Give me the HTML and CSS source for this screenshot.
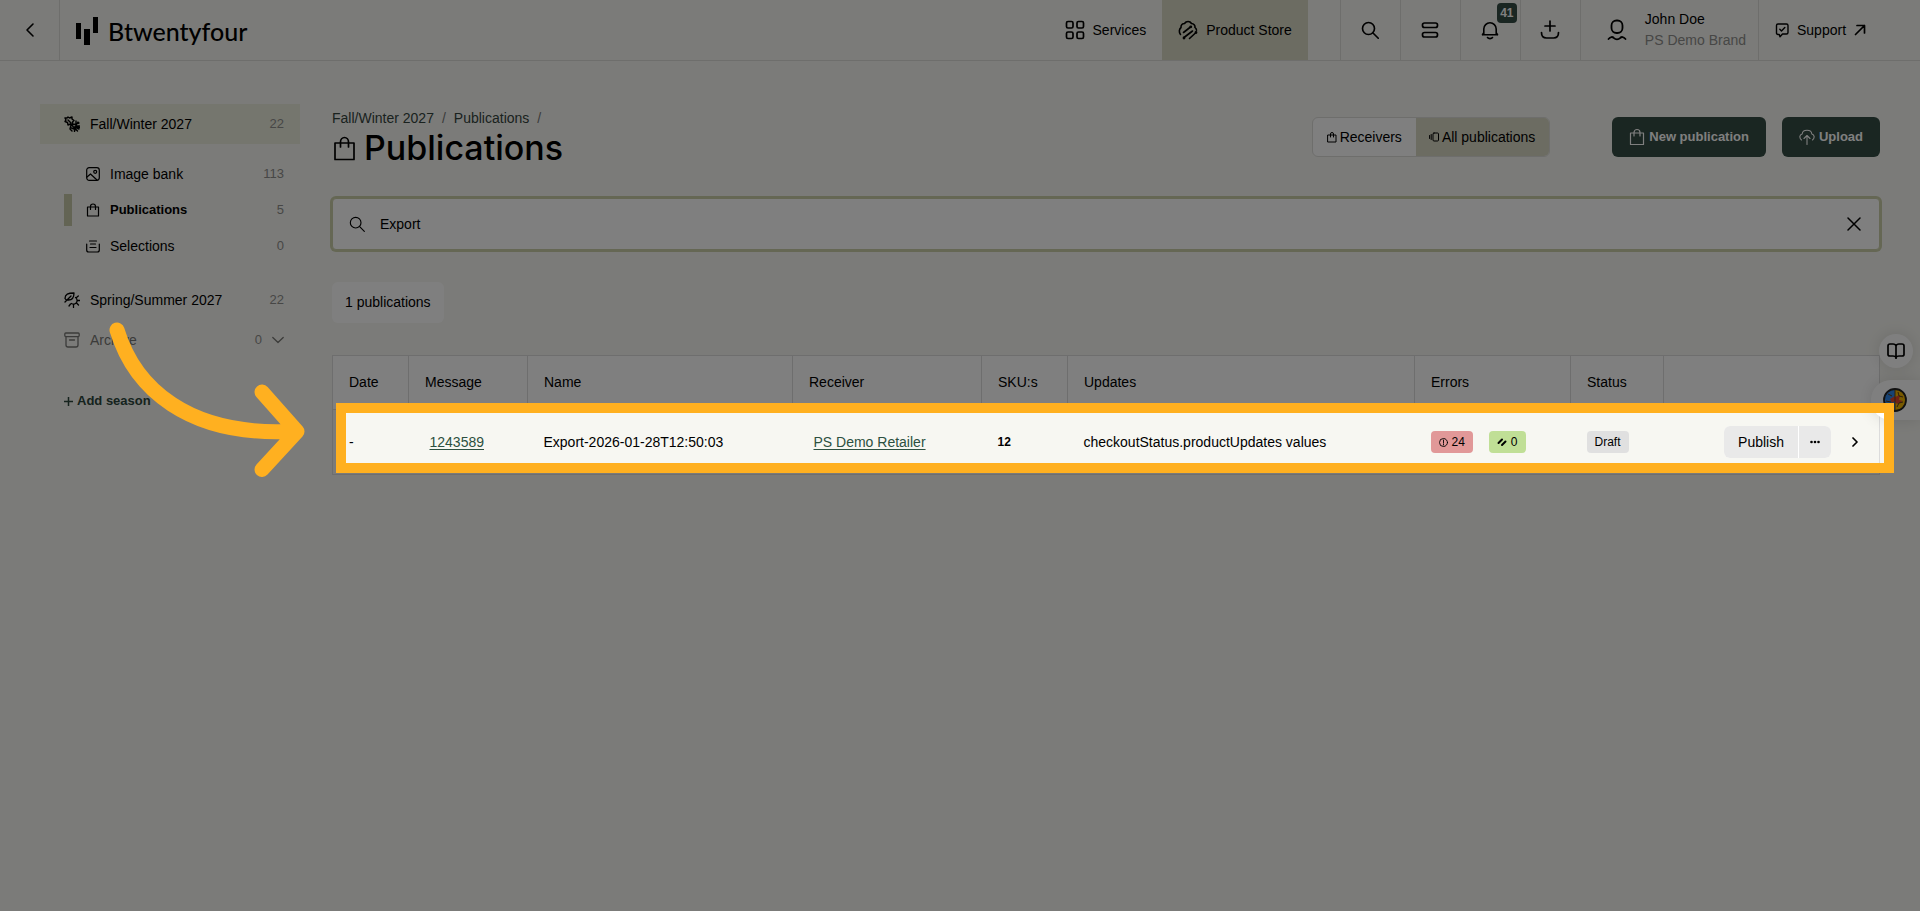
FILE: index.html
```html
<!DOCTYPE html>
<html lang="en">
<head>
<meta charset="utf-8">
<title>Publications</title>
<link rel="stylesheet" href="styles.css">
</head>
<body>
<svg class="defs" aria-hidden="true">
  <symbol id="bag" viewBox="0 0 24 24"><path d="M3.5 7.500h17v14h-17zM8 11V6.500a4 4 0 0 1 8 0V11"/></symbol>
  <symbol id="search" viewBox="0 0 24 24"><circle cx="10" cy="10" r="8"/><path d="M16 16l7 7"/></symbol>
</svg>

<header class="topbar">
  <button class="back" aria-label="Back"><svg class="ic" width="16" height="16" viewBox="0 0 16 16" stroke-width="1.6"><path d="M11 2L5 8l6 6"/></svg></button>
  <a class="logo" href="#">
    <svg width="22" height="28" viewBox="0 0 22 28"><path d="M0 6h5v16H0zM8 12h6v16H8zM17 0h5v16h-5z"/></svg>
    <span>Btwentyfour</span>
  </a>
  <nav class="nav">
    <a class="nav-link" href="#"><svg class="ic" width="20" height="20" viewBox="0 0 20 20" stroke-width="1.700"><rect x="1.500" y="1.500" width="6.500" height="6.500" rx="1.500"/><rect x="12" y="1.500" width="6.500" height="6.500" rx="1.500"/><rect x="1.500" y="12" width="6.500" height="6.500" rx="1.500"/><rect x="12" y="12" width="6.500" height="6.500" rx="1.500"/></svg>Services</a>
    <a class="nav-link active" href="#"><svg class="ic" width="20" height="20" viewBox="0 0 20 20" stroke-width="1.600"><path d="M2.500 14.500C.8 12.500 1 9 3 7.500 2.800 4.800 4.500 3.500 6.500 3.500 8.200.8 12 .8 13.500 3.500c2.200.2 3.800 1.800 3.500 4 1 .8 1.500 1.800 1.500 2.800M5.500 12.500L12.500 7M6 17.500l8.500-6.500M11.500 18.500l6.500-6"/><circle cx="12.800" cy="6.800" r=".6"/><circle cx="6" cy="18" r=".6"/><circle cx="18" cy="12.500" r=".6"/></svg>Product Store</a>
    <button class="cell first" aria-label="Search"><svg class="ic" width="18" height="18" stroke-width="2.200"><use href="#search"/></svg></button>
    <button class="cell" aria-label="Lists"><svg class="ic" width="18" height="18" viewBox="0 0 18 18" stroke-width="1.700"><rect x="1.500" y="2" width="15" height="4.500" rx="2"/><rect x="1.500" y="11.500" width="15" height="4.500" rx="2"/></svg></button>
    <button class="cell bell" aria-label="Notifications"><svg class="ic" width="20" height="20" viewBox="0 0 20 20" stroke-width="1.600"><path d="M2.500 14.800h15M3.800 14.500V9a6.200 6.200 0 0 1 12.400 0v5.500M2.500 14.800l1.300-2M17.500 14.800l-1.300-2M7.500 17.500c1 1.500 4 1.500 5 0"/></svg><span class="count-badge">41</span></button>
    <button class="cell" aria-label="Downloads"><svg class="ic" width="20" height="20" viewBox="0 0 20 20" stroke-width="1.700"><path d="M10 1v10M5 6h10M1.500 12.500c0 4 2 5.500 5 5.500h7c3 0 5-1.500 5-5.500"/></svg></button>
    <button class="cell user"><svg class="ic" width="20" height="22" viewBox="0 0 20 22" stroke-width="1.800"><rect x="4.500" y="1.500" width="11" height="12.500" rx="5"/><path d="M1.500 20c2-2.500 4-2.500 5.500-.8 1.500 1.500 4.500 1.500 6 0 1.500-1.700 3.500-1.700 5.500.8"/></svg><span class="who"><span>John Doe</span><span class="muted">PS Demo Brand</span></span></button>
    <a class="cell support" href="#"><svg class="ic" width="14" height="16" viewBox="0 0 14 16" stroke-width="1.400"><path d="M3 2h8.500q1.500 0 1.500 1.500v7q0 1.500-1.500 1.500H7.500L5 14.800 4.300 12.500H3Q1.500 12.500 1.500 11V3.500Q1.500 2 3 2zM4.800 7.200l1.700 1.700L9.800 5.500"/></svg>Support<svg class="ic" width="12" height="12" viewBox="0 0 12 12" stroke-width="1.700"><path d="M1.500 10.500l9-9M3 1.500h7.500V9"/></svg></a>
  </nav>
</header>

<div class="layout">
  <aside class="side">
    <a class="season active" href="#"><svg class="ic" width="16" height="16" viewBox="0 0 16 16" stroke-width="1.400"><path d="M4 1l1.500 1L8 1v2l2 1.500L8.500 6l.5 2.500L6.500 8 4 9 3.500 6.500 1 5.500 2 4 1 2h2zM4 4l3 3M7 9l-1 4 2 2M8 9.500l5.500 5.500M10 8.500l5-1.500M12 5v5h3.500M10.500 11v4.500M10 11.500h5.500M14 6l-3 5 4 2M7.500 12l5 2"/></svg><span>Fall/Winter 2027</span><span class="num">22</span></a>
    <nav class="sub">
      <a href="#"><svg class="ic" width="14" height="14" viewBox="0 0 14 14" stroke-width="1.200"><rect x=".7" y=".7" width="12.600" height="12.600" rx="2.500"/><circle cx="9.200" cy="4.800" r="1.500"/><path d="M1 10l3.500-3L11 13"/></svg><span>Image bank</span><span class="num">113</span></a>
      <a class="current" href="#"><svg class="ic" width="14" height="14" viewBox="0 0 14 14" stroke-width="1.200"><path d="M1.500 4h11v9h-11zM4.500 6.500V3.500a2.500 2.500 0 0 1 5 0v3"/></svg><span>Publications</span><span class="num">5</span></a>
      <a href="#"><svg class="ic" width="14" height="14" viewBox="0 0 14 14" stroke-width="1.200"><path d="M.7 5v6q0 2 2 2h8.600q2 0 2-2V5M3.500 2h7M4.500 5h5M4 8.500h6"/></svg><span>Selections</span><span class="num">0</span></a>
    </nav>
    <a class="season" href="#"><svg class="ic" width="16" height="16" viewBox="0 0 16 16" stroke-width="1.300"><path d="M1 6.500C1 2 4 1 10 1c0 5-2 7-5.500 7Q2 8.500 1 6.500zM1 10l6-6M7.500 11.500a3.500 3.500 0 0 0 4-6M12.500 5.500l1.800-1.500M13.500 8.500H16M12.500 11l2 2M9.500 13v2.500M6.500 12L5 14"/></svg><span>Spring/Summer 2027</span><span class="num">22</span></a>
    <a class="season archive" href="#"><svg class="ic" width="16" height="16" viewBox="0 0 16 16" stroke-width="1.300"><rect x=".8" y="1" width="14.400" height="3.600" rx="1"/><path d="M2 4.800V13q0 2 2 2h8q2 0 2-2V4.800M5.500 8h5"/></svg><span>Archive</span><span class="num">0</span><svg class="ic" width="12" height="12" viewBox="0 0 12 12" stroke-width="1.300"><path d="M.8 3.500L6 8.500l5.200-5"/></svg></a>
    <button class="add"><svg class="ic" width="9" height="9" viewBox="0 0 9 9" stroke-width="1.500"><path d="M4.500 0v9M0 4.500h9"/></svg>Add season</button>
    <svg class="arrow" width="210" height="170" viewBox="0 0 210 170"><path d="M17 20C34 76 86 128 196 121M162 82l35 39.500-35 38"/></svg>
  </aside>

  <main class="main">
    <div class="head">
      <div>
        <nav class="crumbs"><a href="#">Fall/Winter 2027</a><i>/</i><a href="#">Publications</a><i>/</i></nav>
        <h1><svg class="ic" width="24" height="28" viewBox="0 0 24 28" stroke-width="1.700"><path d="M3 9h19v16.500H3zM8.500 13V8a4 4.500 0 0 1 8 0v5"/></svg>Publications</h1>
      </div>
      <div class="actions">
        <div class="toggle">
          <button><svg class="ic" width="10" height="12" viewBox="0 0 10 12" stroke-width="1"><path d="M1 4h8v7H1zM3.500 6V3a1.500 1.500 0 0 1 3 0v3"/></svg>Receivers</button>
          <button class="on"><svg class="ic" width="10" height="10" viewBox="0 0 10 10" stroke-width="1"><path d="M.6 3.500v3M2.200 2.500v5"/><rect x="4" y="1" width="5.500" height="8" rx="1"/></svg>All publications</button>
        </div>
        <button class="primary"><svg class="ic" width="16" height="18" viewBox="0 0 16 18" stroke-width="1.200"><path d="M1.500 5h13v11.500h-13zM5 8V4.500a3 3 0 0 1 6 0V8"/></svg>New publication</button>
        <button class="primary"><svg class="ic" width="16" height="16" viewBox="0 0 16 16" stroke-width="1.100"><path d="M2.500 11C0 9 .5 5.500 3.200 5 3.500 0 12.500 0 12.800 5c2.700.5 3.200 4 .7 6M8 15.500V7M5 9.500L8 6.500l3 3"/></svg>Upload</button>
      </div>
    </div>

    <label class="searchbox">
      <svg class="ic" width="16" height="16" stroke-width="1.700"><use href="#search"/></svg>
      <input type="text" value="Export" aria-label="Search publications">
      <button aria-label="Clear"><svg class="ic" width="14" height="14" viewBox="0 0 14 14" stroke-width="1.500"><path d="M1 1l12 12M13 1L1 13"/></svg></button>
    </label>

    <p class="total">1 publications</p>

    <div class="table-wrap">
      <table>
        <colgroup><col class="c-date"><col class="c-message"><col class="c-name"><col class="c-receiver"><col class="c-skus"><col><col class="c-errors"><col class="c-status"><col class="c-tools"></colgroup>
        <thead><tr><th>Date</th><th>Message</th><th>Name</th><th>Receiver</th><th>SKU:s</th><th>Updates</th><th>Errors</th><th>Status</th><th></th></tr></thead>
        <tbody><tr>
          <td>-</td>
          <td><a class="link" href="#">1243589</a></td>
          <td>Export-2026-01-28T12:50:03</td>
          <td><a class="link" href="#">PS Demo Retailer</a></td>
          <td class="strong">12</td>
          <td>checkoutStatus.productUpdates values</td>
          <td><div class="pills"><span class="pill red"><svg class="ic" width="9" height="9" viewBox="0 0 9 9" stroke-width=".9"><circle cx="4.500" cy="4.500" r="4"/><path d="M4.500 2v3M4.500 6v1"/></svg>24</span><span class="pill green"><svg class="ic" width="10" height="10" viewBox="0 0 10 10" stroke-width="2"><path d="M1.500 6L5 2.500M5 8l3.500-3.500"/></svg>0</span></div></td>
          <td><span class="pill gray">Draft</span></td>
          <td><div class="tools"><div class="split"><button>Publish</button><button class="more" aria-label="More"><svg width="10" height="4" viewBox="0 0 10 4"><circle cx="1.500" cy="2" r="1.300"/><circle cx="5" cy="2" r="1.300"/><circle cx="8.500" cy="2" r="1.300"/></svg></button></div><button class="open" aria-label="Open"><svg class="ic" width="6" height="10" viewBox="0 0 6 10" stroke-width="1.700"><path d="M1 1l4 4-4 4"/></svg></button></div></td>
        </tr></tbody>
      </table>
      <div class="spotlight"></div>
    </div>
  </main>
</div>

<div class="floaters">
  <button class="guide" aria-label="Guide"><svg class="ic" width="18" height="16" viewBox="0 0 18 16" stroke-width="1.700"><path d="M9 3v12.500M9 3Q8.500 1 6 1H3Q1 1 1 3v8.500q0 1.500 2 1.500h3q2.500 0 3 1.500.5-1.500 3-1.500h3q2 0 2-1.500V3q0-2-2-2h-3Q9.500 1 9 3z"/></svg></button>
  <button class="brain" aria-label="Assistant"><svg width="24" height="24" viewBox="0 0 24 24"><circle cx="12" cy="12" r="11" fill="#f0b400"/><path d="M12 1a11 11 0 0 0 0 22z" fill="#2f86e8"/><path d="M12 8l-5 3 2 4 3-2zM12 9l5-2-1 5 4 1-6 3-2-2z" fill="#e0452c"/><path d="M12 2v20M5 6l4 2M3 13l5 1M8 19l1-4M15 4l1 4 4 1M14 19l2-4 4-1" fill="none" stroke="#604018" stroke-width="1"/><circle cx="12" cy="12" r="11" fill="none" stroke="#222" stroke-width="1.800"/></svg></button>
</div>
</body>
</html>
```
FILE: styles.css
```css
* { box-sizing: border-box; }

body {
  margin: 0;
  min-height: 100vh;
  background: #f7f7f2;
  color: #000;
  font: 14px/20px "Liberation Sans", Arial, sans-serif;
}

button, input { font: inherit; color: inherit; border: 0; background: none; padding: 0; margin: 0; }
a { color: inherit; text-decoration: none; }
svg { flex: none; }

.defs { position: absolute; width: 0; height: 0; }
.ic { fill: none; stroke: currentColor; stroke-linecap: round; stroke-linejoin: round; }

/* Top bar */
.topbar { display: flex; height: 61px; border-bottom: 1px solid #dcdcd8; }
.back { width: 60px; border-right: 1px solid #dcdcd8; display: grid; place-items: center; }
.logo { display: flex; align-items: center; gap: 10px; padding: 2px 0 0 16px; font: 500 25px/28px Lato, sans-serif; }
.nav { display: flex; margin-left: auto; }
.nav-link { display: flex; align-items: center; gap: 8px; padding: 0 16px; }
.nav-link.active { background: #d8d8c4; }
.cell { position: relative; width: 60px; display: flex; align-items: center; justify-content: center; border-left: 1px solid #dcdcd8; }
.cell.first { margin-left: 32px; }
.count-badge {
  position: absolute; top: 3px; right: 3px; width: 20px; height: 20px;
  border-radius: 4px; background: #344c44; color: #fff;
  font-size: 12px; font-weight: bold; text-align: center;
}
.cell.user { width: auto; padding: 0 12px 0 26px; gap: 18px; }
.who { display: flex; flex-direction: column; text-align: left; line-height: 21px; }
.muted { color: #8e8e8c; }
.cell.support { width: 162px; justify-content: flex-start; gap: 8px; padding-left: 16px; }

/* Page columns */
.layout { display: flex; gap: 32px; padding: 43px 40px 0; }
.side { position: relative; width: 260px; flex: none; }
.main { flex: 1; min-width: 0; }

/* Sidebar */
.season { display: flex; align-items: center; gap: 10px; height: 40px; padding: 0 16px 0 24px; }
.season.active { background: #ebecdc; }
.season.archive { color: #777774; }
.num { margin-left: auto; color: #8e8e8c; font-size: 13px; }
.sub { display: flex; flex-direction: column; padding: 12px 0 16px; }
.sub a { display: flex; align-items: center; gap: 10px; height: 36px; padding: 0 16px 0 46px; }
.sub .current { position: relative; font-size: 13px; font-weight: bold; }
.sub .current::before { content: ""; position: absolute; left: 24px; top: 2px; width: 8px; height: 32px; background: #c6c8a8; }
.sub .current .num { font-weight: normal; }
.add { display: flex; align-items: center; gap: 4px; margin: 31px 0 0 24px; color: #2c463c; font-size: 13px; font-weight: bold; }
.arrow { position: absolute; left: 60px; top: 206px; z-index: 20; fill: none; stroke: #ffb020; stroke-width: 15; stroke-linecap: round; stroke-linejoin: round; }

/* Page heading */
.head { display: flex; justify-content: space-between; padding-top: 4px; }
.crumbs { display: flex; gap: 8px; color: #34443e; }
.crumbs i { font-style: normal; color: #777; }
h1 { display: flex; align-items: center; gap: 8px; margin: 0; font: 500 34px/40px Inter, sans-serif; }
.actions { display: flex; height: 40px; margin-top: 9px; }
.toggle { display: flex; margin-right: 62px; border: 1px solid #dcdcd8; border-radius: 6px; background: #fff; overflow: hidden; }
.toggle button { display: flex; align-items: center; gap: 3px; padding: 0 14px; }
.toggle .on { background: #d8d8c4; padding: 0 14px 0 13px; }
.primary { display: flex; align-items: center; gap: 4px; padding: 0 17px; border-radius: 6px; background: #344c44; color: #fff; font-size: 13px; font-weight: bold; }
.primary + .primary { margin-left: 16px; }

/* Search */
.searchbox {
  display: flex; align-items: center; gap: 15px; height: 52px; margin-top: 30px; padding: 0 18px 0 16px;
  border: 1px solid #cacea8; border-radius: 4px; box-shadow: 0 0 0 2px #cacea8; background: #fff;
}
.searchbox input { flex: 1; outline: 0; }
.searchbox button { display: grid; }

.total { width: max-content; margin: 32px 0; padding: 10px 13px 11px; border-radius: 6px; background: #fff; }

/* Table */
.table-wrap { position: relative; }
table { width: 100%; table-layout: fixed; border-collapse: collapse; border: 1px solid #dcdcdc; }
th { height: 54px; padding: 0 16px 2px; border: 1px solid #dcdcdc; background: #fff; font-weight: normal; text-align: left; }
td { height: 65px; padding: 0 16px; }
.c-date { width: 76px; }
.c-message { width: 119px; }
.c-name { width: 265px; }
.c-receiver { width: 189px; }
.c-skus { width: 86px; }
.c-errors { width: 156px; }
.c-status { width: 93px; }
.c-tools { width: 216px; }
.link { margin-left: 5px; color: #2c5040; text-decoration: underline; text-underline-offset: 2px; }
.strong { font-size: 12px; font-weight: bold; }
.pills { display: flex; gap: 16px; }
.pill { display: inline-flex; align-items: center; gap: 4px; height: 22px; padding: 0 8px; border-radius: 4px; font-size: 12px; }
.red { background: #e19898; }
.green { background: #c0df96; }
.gray { background: #e0e0e0; }
.tools { display: flex; align-items: center; justify-content: flex-end; gap: 21px; padding-right: 5px; }
.split { display: flex; gap: 1px; height: 32px; background: #fff; border-radius: 6px; overflow: hidden; }
.split button { padding: 0 14px; background: #e9e9e9; }
.split .more { display: grid; place-items: center; padding: 0 11px; }
.open { display: grid; }

/* Dims the page around the highlighted row */
.spotlight {
  position: absolute; z-index: 10; top: 48px; left: 4px; right: -14px; height: 70px;
  border: 10px solid #ffb020; box-shadow: 0 0 0 3000px rgba(0, 0, 0, 0.5); pointer-events: none;
}

/* Floating helpers */
.floaters { position: absolute; right: 0; top: 334px; z-index: 5; display: flex; flex-direction: column; align-items: flex-end; gap: 12px; }
.guide { display: grid; place-items: center; width: 34px; height: 34px; margin-right: 7px; border-radius: 50%; background: #fff; box-shadow: 0 0 16px rgba(0, 0, 0, 0.12); }
.brain { display: flex; align-items: center; width: 49px; height: 40px; padding-left: 12px; border-radius: 20px 0 0 20px; background: #fff; box-shadow: 0 0 16px rgba(0, 0, 0, 0.12); }
```
